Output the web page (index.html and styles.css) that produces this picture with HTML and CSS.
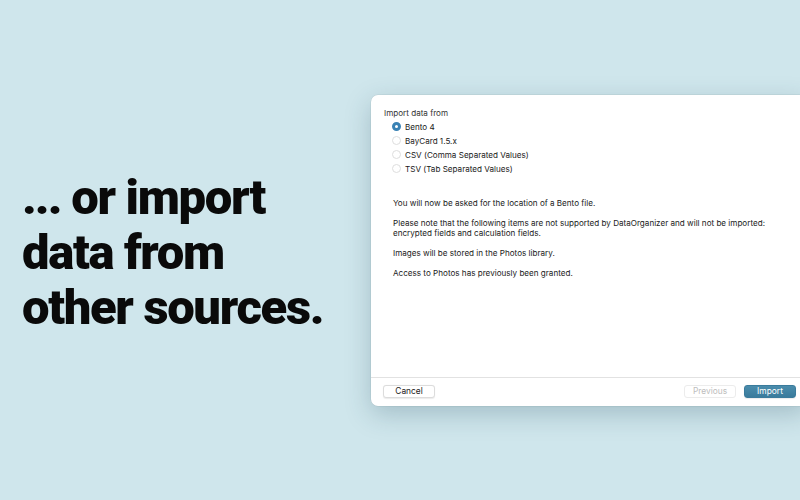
FILE: index.html
```html
<!DOCTYPE html>
<html>
<head>
  <meta charset="utf-8">
  <title>Import data</title>
  <link rel="stylesheet" href="styles.css">
</head>
<body>
  <div class="page">
    <div class="headline">
      <h1><span class="dots">...</span> or import<br>data from<br>other sources.</h1>
    </div>

    <div class="window">
      <div class="window-body">
        <div class="field-label">Import data from</div>
        <div class="radio-list">
          <div class="radio-row"><span class="radio checked"></span>Bento 4</div>
          <div class="radio-row"><span class="radio"></span>BayCard 1.5.x</div>
          <div class="radio-row"><span class="radio"></span>CSV (Comma Separated Values)</div>
          <div class="radio-row"><span class="radio"></span>TSV (Tab Separated Values)</div>
        </div>

        <div class="notes">
          <p>You will now be asked for the location of a Bento file.</p>
          <p>Please note that the following items are not supported by DataOrganizer and will not be imported:<br>encrypted fields and calculation fields.</p>
          <p>Images will be stored in the Photos library.</p>
          <p>Access to Photos has previously been granted.</p>
        </div>
      </div>

      <div class="window-footer">
        <button class="btn">Cancel</button>
        <div class="footer-right">
          <button class="btn" disabled>Previous</button>
          <button class="btn primary">Import</button>
        </div>
      </div>
    </div>
  </div>
</body>
</html>
```

FILE: styles.css
```css
html, body {
  margin: 0;
  padding: 0;
}

body {
  background-color: #cfe6ec;
  font-family: Inter, "Liberation Sans", sans-serif;
  overflow: hidden;
}

.page {
  display: flex;
  align-items: center;
  width: 800px;
  height: 500px;
  overflow: hidden;
}

.headline {
  width: 349px;
  padding-left: 22px;
  padding-top: 4px;
  flex-shrink: 0;
}

h1 {
  margin: 0;
  font-family: Roboto, Inter, sans-serif;
  font-size: 49px;
  font-weight: 900;
  line-height: 55px;
  letter-spacing: -1.35px;
  color: #0a0a0a;
}

.dots {
  letter-spacing: -2px;
}

.window {
  flex-shrink: 0;
  width: 437px;
  height: 311px;
  background: white;
  border-radius: 7px;
  box-shadow: 0 8px 26px rgba(30, 70, 90, 0.25), 0 0 0 0.5px rgba(0, 0, 0, 0.08);
  display: flex;
  flex-direction: column;
  font-size: 8.1px;
  color: #1a1a1a;
}

.window-body {
  flex: 1;
  padding: 13px 12px 0 13px;
}

.field-label {
  line-height: 10px;
  color: #333;
}

.radio-list {
  margin-top: 2px;
  padding-left: 8px;
}

.radio-row {
  display: flex;
  align-items: center;
  height: 14px;
  gap: 4px;
}

.radio {
  width: 9px;
  height: 9px;
  border-radius: 50%;
  border: 1px solid #dedede;
  background: white;
  box-sizing: border-box;
}

.radio.checked {
  border: 3px solid #3a82b4;
  background: white;
}

.notes {
  margin-top: 22px;
  padding-left: 9px;
}

.notes p {
  margin: 0 0 10px 0;
  line-height: 10px;
}

.window-footer {
  height: 29px;
  border-top: 1px solid #e2e2e2;
  display: flex;
  align-items: flex-start;
  justify-content: space-between;
  padding: 7px 12px 0 12px;
  box-sizing: border-box;
}

.footer-right {
  display: flex;
  gap: 8px;
}

.btn {
  font-family: Inter, "Liberation Sans", sans-serif;
  font-size: 8.4px;
  width: 52px;
  height: 13px;
  padding: 0;
  border: 0.5px solid #dcdcdc;
  border-radius: 3px;
  background: white;
  color: #222;
  box-shadow: 0 0.5px 1px rgba(0, 0, 0, 0.08);
}

.btn:disabled {
  color: #bdbdbd;
  border-color: #ececec;
  box-shadow: none;
}

.btn.primary {
  background: linear-gradient(#4a8cac, #3a7b9c);
  border-color: #3a7b9c;
  color: white;
}
```
